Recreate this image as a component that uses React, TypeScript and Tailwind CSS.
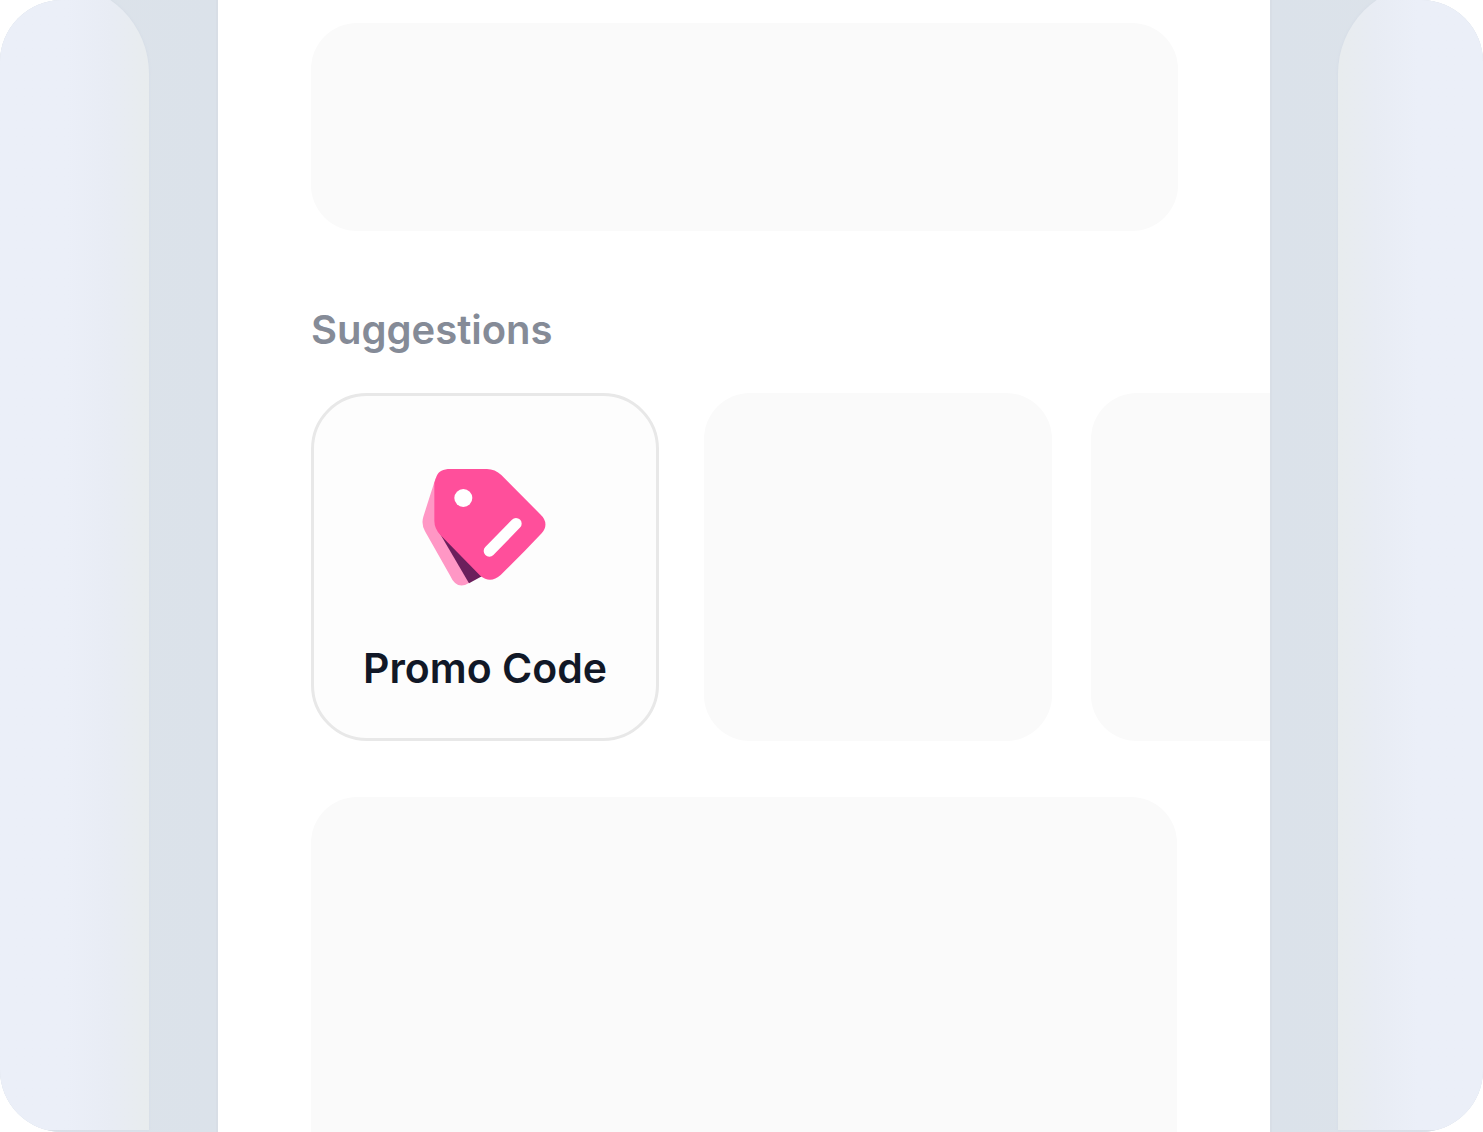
import React from 'react'
import clsx from 'clsx'

function PromoIcon() {
  return (
    <svg viewBox="62 48 384 366" className="h-[122px] w-32" aria-hidden="true">
      {/* Back tag */}
      <path
        d="M106 84 L69 200 Q62 222 74 244 L150 378 Q165 413 194 405 L212 396 L150 240 Z"
        fill="#ff97c5"
      />
      <path d="M116 246 L206 400 L246 378 L190 290 Z" fill="#6b1f5c" />
      {/* Front tag */}
      <path
        d="M150 57 H260 Q284 57 303 75 L419 192 Q449 220 424 250 Q363 315 301 375 Q270 402 240 377 L121 256 Q102 236 102 212 V99 L108 80 C115 63 128 57 150 57 Z"
        fill="#ff4f9b"
      />
      <circle cx="189" cy="144" r="27" fill="#fff" />
      <path d="M347 221 L267 303" stroke="#fff" strokeWidth="34" strokeLinecap="round" />
    </svg>
  )
}

interface PlaceholderProps {
  className?: string
}

function Placeholder({ className }: PlaceholderProps) {
  return <div className={clsx('bg-[#fafafa]', className)} />
}

export default function App() {
  return (
    <div className="flex min-h-screen overflow-hidden rounded-[62px] bg-[#dde3ea] font-['Inter',sans-serif]">
      {/* Left edge */}
      <div className="flex w-[218px] shrink-0 border-r-2 border-[#d8dee6] bg-linear-to-r from-[#dde3ea] to-[#dbe2ea]">
        <div className="-mt-4 mb-0.5 w-[149px] rounded-tr-[90px] bg-linear-to-r from-[#ebeff8] from-45% via-[#e8ecf4] via-75% to-[#e8ecee] shadow-[0_0_3px_#d3dae5]" />
      </div>

      <main className="flex min-w-0 flex-1 flex-col overflow-hidden bg-white pt-[23px] pl-[93px]">
        <Placeholder className="mr-[92px] h-52 rounded-[46px]" />

        <h2 className="mt-[75px] text-[40px] leading-[48px] font-semibold text-[#858b97]">
          Suggestions
        </h2>

        <div className="mt-[39px] flex">
          <button
            type="button"
            className="flex size-[348px] shrink-0 flex-col items-center rounded-[56px] border-[3px] border-[#e8e8e8] bg-[#fdfdfd] pt-[70px]"
          >
            <PromoIcon />
            <span className="mt-14 text-[41px] leading-[48px] font-semibold whitespace-nowrap text-[#111827]">
              Promo Code
            </span>
          </button>
          <Placeholder className="ml-[45px] size-[348px] shrink-0 rounded-[46px]" />
          <Placeholder className="ml-[39px] size-[348px] shrink-0 rounded-[46px]" />
        </div>

        <Placeholder className="mt-14 mr-[93px] flex-1 rounded-t-[46px]" />
      </main>

      {/* Right edge */}
      <div className="flex w-[213px] shrink-0 justify-end border-l-2 border-[#d8dee6] bg-linear-to-r from-[#dbe2ea] to-[#dde3ea]">
        <div className="-mt-4 mb-0.5 w-[145px] rounded-tl-[90px] bg-linear-to-l from-[#ebeff8] from-45% via-[#e8ecf4] via-75% to-[#e8ecee] shadow-[0_0_3px_#d3dae5]" />
      </div>
    </div>
  )
}
